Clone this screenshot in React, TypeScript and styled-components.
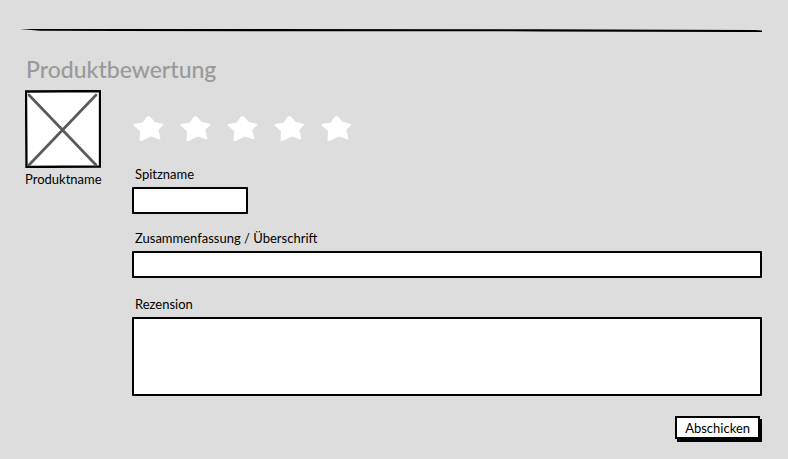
import React, { useState } from "react";
import styled, { createGlobalStyle } from "styled-components";

const GlobalStyle = createGlobalStyle`
  *, *::before, *::after { box-sizing: border-box; }
  body {
    margin: 0;
    background: #dddddd;
    color: #000000;
    font-family: Lato, "Open Sans", sans-serif;
    font-size: 13px;
    line-height: 16px;
  }
`;

const Page = styled.main`
  padding: 28px 26px 17px 20px;
`;

const Rule = styled.svg`
  display: block;
  width: 100%;
  height: 4px;
`;

const Title = styled.h1`
  margin: 22px 0 6px 6px;
  color: #999999;
  font-size: 23px;
  font-weight: 500;
  line-height: 30px;
`;

const Review = styled.div`
  display: grid;
  grid-template-columns: 76px minmax(0, 1fr);
  column-gap: 31px;
  padding-left: 5px;
`;

const Product = styled.figure`
  margin: 0;
`;

const Placeholder = styled.svg`
  display: block;
  width: 100%;
  height: 78px;
`;

const ProductName = styled.figcaption`
  margin-top: 3px;
  text-align: center;
  white-space: nowrap;
`;

const Form = styled.form`
  display: flex;
  flex-direction: column;
`;

const Rating = styled.fieldset`
  display: flex;
  gap: 16px;
  margin: 26px 0 25px;
  padding: 0 0 0 1px;
  border: 0;
`;

const StarLabel = styled.label`
  display: grid;
  width: 31px;
  height: 25px;
  cursor: pointer;

  > * {
    grid-area: 1 / 1;
  }

  &:focus-within {
    outline: 1px dashed #555555;
    outline-offset: 3px;
  }
`;

const StarInput = styled.input`
  width: 100%;
  height: 100%;
  margin: 0;
  opacity: 0;
`;

const StarShape = styled.svg<{ $filled: boolean }>`
  width: 31px;
  height: 25px;
  fill: ${({ $filled }) => ($filled ? "#ffc83d" : "#ffffff")};
`;

const Field = styled.div<{ $gap: number }>`
  display: flex;
  flex-direction: column;
  gap: 5px;
  margin-bottom: ${({ $gap }) => $gap}px;
`;

const Label = styled.label`
  padding-left: 3px;
`;

const TextInput = styled.input<{ $short?: boolean }>`
  width: ${({ $short }) => ($short ? "116px" : "100%")};
  height: 27px;
  padding: 2px 6px;
  border: 2px solid #000000;
  border-radius: 1px;
  background: #ffffff;
  font: inherit;
`;

const TextArea = styled.textarea`
  display: block;
  width: 100%;
  height: 79px;
  padding: 4px 6px;
  border: 2px solid #000000;
  border-radius: 1px;
  background: #ffffff;
  font: inherit;
  resize: none;
`;

const Submit = styled.button`
  align-self: flex-end;
  height: 23px;
  margin-right: 2px;
  padding: 0 8px;
  border: 2px solid #000000;
  background: #ffffff;
  box-shadow: 2px 3px 0 #000000;
  color: #000000;
  font: inherit;
  cursor: pointer;
`;

export default function App() {
  const [rating, setRating] = useState(0);

  return (
    <>
      <GlobalStyle />
      <Page>
        <Rule viewBox="0 0 742 4" preserveAspectRatio="none" aria-hidden="true">
          <path d="M0 1 L105 1 L520 1.3 L735 2 L742 2.5 V4 H716 L520 3.4 L100 3 L20 2.7 Z" />
        </Rule>
        <Title>Produktbewertung</Title>
        <Review>
          <Product>
            <Placeholder viewBox="0 0 76 78" aria-hidden="true">
              <path d="M1 1.5 L75 1 L75 76.5 L1.5 77 Z" fill="#fff" stroke="#000" strokeWidth="2.3" />
              <path d="M4 5 L71 75 M71 5 L4 75" fill="none" stroke="#5a5a5a" strokeWidth="2.7" strokeLinecap="round" />
            </Placeholder>
            <ProductName>Produktname</ProductName>
          </Product>
          <Form onSubmit={(event) => event.preventDefault()}>
            <Rating aria-label="Bewertung">
              {[1, 2, 3, 4, 5].map((value) => (
                <StarLabel key={value}>
                  <StarInput
                    type="radio"
                    name="rating"
                    value={value}
                    aria-label={`${value} von 5`}
                    checked={rating === value}
                    onChange={() => setRating(value)}
                  />
                  <StarShape viewBox="0 0 31 25" $filled={value <= rating} aria-hidden="true">
                    <path d="M15.5 0 L17.5 1 L21.5 5.8 L29.5 7.8 L30.5 8.8 L25.3 14 L27.5 22.8 L26.5 23.6 L18 20.5 L8.5 25 L6.5 24.8 L7 15 L0.3 9.2 L1 8 L9.8 6.4 L13.5 1 Z" />
                  </StarShape>
                </StarLabel>
              ))}
            </Rating>
            <Field $gap={16}>
              <Label htmlFor="nickname">Spitzname</Label>
              <TextInput id="nickname" $short />
            </Field>
            <Field $gap={18}>
              <Label htmlFor="summary">Zusammenfassung / Überschrift</Label>
              <TextInput id="summary" />
            </Field>
            <Field $gap={20}>
              <Label htmlFor="review">Rezension</Label>
              <TextArea id="review" />
            </Field>
            <Submit type="submit">Abschicken</Submit>
          </Form>
        </Review>
      </Page>
    </>
  );
}
